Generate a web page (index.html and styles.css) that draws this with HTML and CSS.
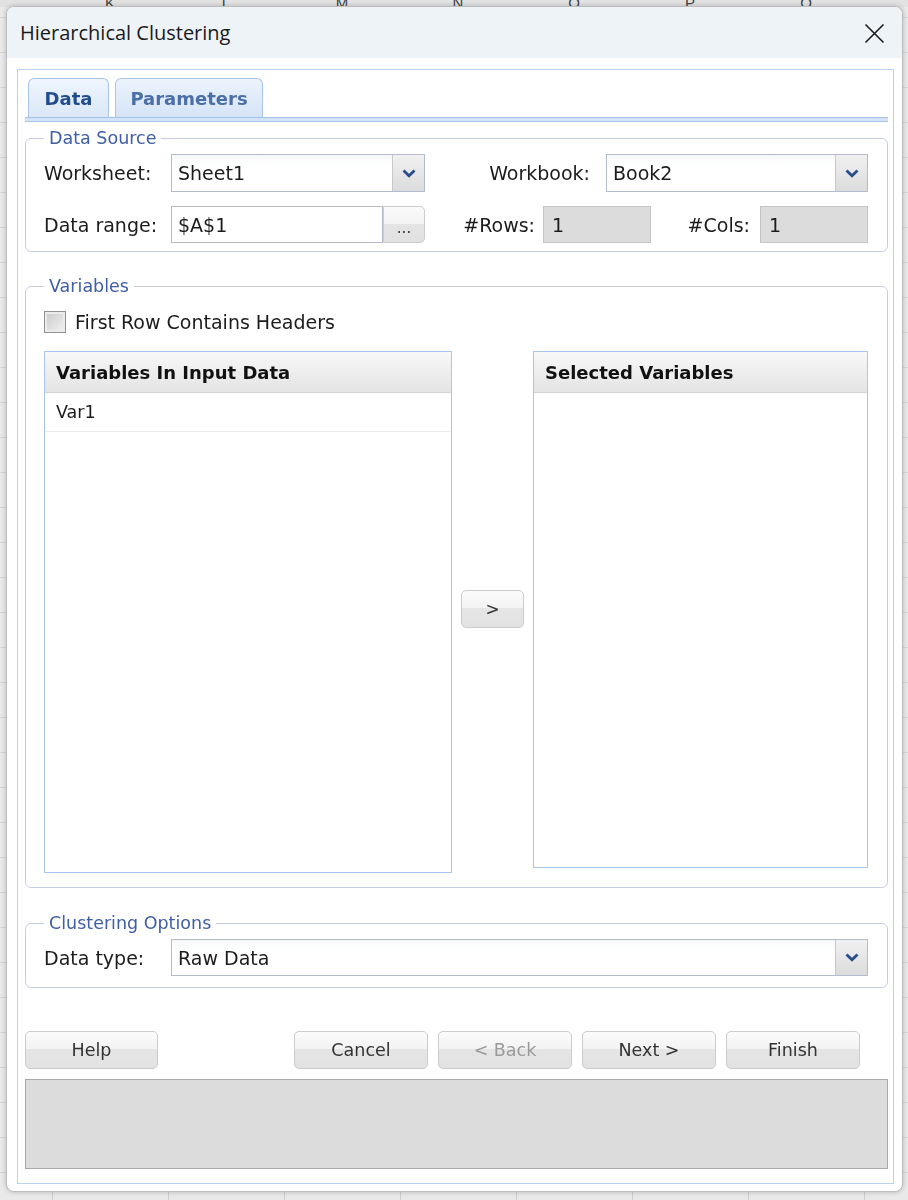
FILE: index.html
```html
<!DOCTYPE html>
<html>
<head>
<meta charset="utf-8">
<title>Hierarchical Clustering</title>
<link rel="stylesheet" href="styles.css">
</head>
<body>
<div class="sheet">
  <div class="colhead"><span>K</span><span>L</span><span>M</span><span>N</span><span>O</span><span>P</span><span>Q</span></div>
</div>
<div class="dialog">
  <div class="titlebar">
    <span class="title">Hierarchical Clustering</span>
    <svg class="close" width="21" height="21" viewBox="0 0 21 21"><path d="M1.5 1.5 L19.5 19.5 M19.5 1.5 L1.5 19.5" stroke="#1a1a1a" stroke-width="1.6" fill="none"/></svg>
  </div>
  <div class="dbody">
    <div class="panel">
      <div class="tabs">
        <div class="tab active">Data</div>
        <div class="tab">Parameters</div>
      </div>
      <div class="tabline"></div>

      <fieldset class="group ds">
        <legend>Data Source</legend>
        <div class="row r1">
          <span class="lbl">Worksheet:</span>
          <div class="select w254"><span class="val">Sheet1</span><span class="arrow"><svg width="14" height="9" viewBox="0 0 14 9"><path d="M1.5 1.5 L7 6.8 L12.5 1.5" stroke="#2b4c8c" stroke-width="2.8" fill="none"/></svg></span></div>
          <span class="lbl right wb">Workbook:</span>
          <div class="select w262"><span class="val">Book2</span><span class="arrow"><svg width="14" height="9" viewBox="0 0 14 9"><path d="M1.5 1.5 L7 6.8 L12.5 1.5" stroke="#2b4c8c" stroke-width="2.8" fill="none"/></svg></span></div>
        </div>
        <div class="row r2">
          <span class="lbl">Data range:</span>
          <div class="input w212">$A$1</div>
          <div class="dots">...</div>
          <span class="lbl right rows">#Rows:</span>
          <div class="ro">1</div>
          <span class="lbl right cols">#Cols:</span>
          <div class="ro">1</div>
        </div>
      </fieldset>

      <fieldset class="group vars">
        <legend>Variables</legend>
        <div class="chkrow"><span class="chk"></span><span class="chklbl">First Row Contains Headers</span></div>
        <div class="lists">
          <div class="list left">
            <div class="lhead">Variables In Input Data</div>
            <div class="litem">Var1</div>
          </div>
          <div class="movecol"><div class="btn move">&gt;</div></div>
          <div class="list right">
            <div class="lhead">Selected Variables</div>
          </div>
        </div>
      </fieldset>

      <fieldset class="group opts">
        <legend>Clustering Options</legend>
        <div class="row r3">
          <span class="lbl">Data type:</span>
          <div class="select wide"><span class="val">Raw Data</span><span class="arrow"><svg width="14" height="9" viewBox="0 0 14 9"><path d="M1.5 1.5 L7 6.8 L12.5 1.5" stroke="#2b4c8c" stroke-width="2.8" fill="none"/></svg></span></div>
        </div>
      </fieldset>

      <div class="buttons">
        <div class="btn">Help</div>
        <div class="btngroup">
          <div class="btn">Cancel</div>
          <div class="btn disabled">&lt; Back</div>
          <div class="btn">Next &gt;</div>
          <div class="btn">Finish</div>
        </div>
      </div>
      <div class="status"></div>
    </div>
  </div>
</div>
</body>
</html>
```

FILE: styles.css
```css
html, body {
  margin: 0;
  padding: 0;
  width: 908px;
  height: 1200px;
  overflow: hidden;
}
body {
  font-family: "DejaVu Sans", sans-serif;
  color: #1c1c1c;
  background: #e8e8e8;
}
.sheet {
  position: fixed;
  left: 0; top: 0; right: 0; bottom: 0;
  background-color: #e9e9e9;
  background-image:
    linear-gradient(to right, #cdcdcd 1px, transparent 1px),
    linear-gradient(to bottom, #d6d6d6 1px, transparent 1px);
  background-size: 116px 100%, 100% 35px;
  background-position: 52px 0, 0 17px;
}
.colhead {
  display: flex;
  padding-left: 52px;
  height: 7px;
  overflow: hidden;
  background: #e2e2e2;
}
.colhead span {
  width: 116px;
  flex: none;
  text-align: center;
  font-family: "Liberation Sans", sans-serif;
  font-size: 15px;
  line-height: 6px;
  color: #444;
}
.dialog {
  position: absolute;
  left: 6px;
  top: 6px;
  width: 897px;
  height: 1186px;
  box-sizing: border-box;
  border: 1px solid #bdbdbd;
  border-radius: 8px;
  background: #fff;
  box-shadow: 0 0 5px rgba(0,0,0,0.22);
  display: flex;
  flex-direction: column;
  overflow: hidden;
}
.titlebar {
  height: 51px;
  flex: none;
  background: #eef3f8;
  display: flex;
  align-items: center;
  justify-content: space-between;
  padding: 0 17px 0 13px;
}
.title {
  font-family: "Open Sans", "Noto Sans", sans-serif;
  font-size: 20px;
  color: #1a1a1a;
}
.close { display: block; margin-top: 2px; }
.dbody {
  flex: 1;
  display: flex;
  padding: 11px 8px 7px 10px;
}
.panel {
  flex: 1;
  border: 1px solid #b9d1f0;
  padding: 8px 5px 0 7px;
  display: flex;
  flex-direction: column;
}
.tabs {
  display: flex;
  height: 39px;
  margin-left: 3px;
}
.tab {
  box-sizing: border-box;
  height: 39px;
  border: 1px solid #a9c4ea;
  border-bottom: none;
  border-radius: 6px 6px 0 0;
  background: linear-gradient(#ecf3fc, #d5e4f7);
  font-weight: bold;
  font-size: 18px;
  color: #4a6ea6;
  display: flex;
  align-items: center;
  justify-content: center;
}
.tab.active { width: 81px; color: #1f4d8e; background: linear-gradient(#eef5fd, #dbe8f8); }
.tab + .tab { width: 148px; margin-left: 6px; }
.tabline {
  height: 3px;
  border-top: 1px solid #a3c0e8;
  border-bottom: 1px solid #a9c4ea;
  background: #d4e4f8;
}
.group {
  margin: 0;
  min-width: 0;
  border: 1px solid #c3cde0;
  border-radius: 6px;
  padding: 5px 19px 8px 18px;
}
.group legend {
  font-size: 17.5px;
  line-height: 22px;
  color: #3f5ea6;
  padding: 0 5px;
}
.ds { margin-top: 5px; }
.vars { margin-top: 23px; padding-bottom: 14px; }
.opts { margin-top: 24px; padding-bottom: 11px; }
.row {
  display: flex;
  align-items: center;
}
.r1 { height: 38px; }
.r2 { height: 37px; margin-top: 14px; }
.r3 { height: 37px; }
.lbl {
  width: 127px;
  flex: none;
  font-size: 19px;
  box-sizing: border-box;
}
.lbl.right { text-align: right; }
.lbl.wb { width: 181px; padding-right: 16px; }
.lbl.rows { width: 118px; padding-right: 8px; }
.lbl.cols { width: 109px; padding-right: 10px; }
.select {
  height: 100%;
  box-sizing: border-box;
  border: 1px solid #b2bccd;
  background: linear-gradient(#f6f8f8, #ffffff 30%);
  display: flex;
  align-items: center;
  flex: none;
}
.w254 { width: 254px; }
.w262 { width: 262px; }
.wide { width: 697px; }
.select .val {
  flex: 1;
  font-size: 19px;
  padding-left: 6px;
}
.arrow {
  width: 31px;
  height: 100%;
  border-left: 1px solid #c9c9c9;
  background: linear-gradient(#f0f0f0, #dcdcdc);
  display: flex;
  align-items: center;
  justify-content: center;
}
.arrow svg { display: block; }
.input {
  height: 100%;
  box-sizing: border-box;
  border: 1px solid #b2bccd;
  background: #fff;
  font-size: 19px;
  padding-left: 6px;
  display: flex;
  align-items: center;
  flex: none;
}
.w212 { width: 212px; }
.dots {
  width: 42px;
  height: 100%;
  box-sizing: border-box;
  flex: none;
  border: 1px solid #cbcbcb;
  border-radius: 0 5px 5px 0;
  background: linear-gradient(#fafafa, #f3f3f3 48%, #e4e4e4 50%, #e2e2e2);
  font-size: 15px;
  color: #333;
  display: flex;
  align-items: flex-end;
  justify-content: center;
  padding-bottom: 5px;
}
.ro {
  width: 108px;
  height: 100%;
  box-sizing: border-box;
  flex: none;
  border: 1px solid #c5c5c5;
  background: #dcdcdc;
  font-size: 19px;
  padding-left: 8px;
  display: flex;
  align-items: center;
}
.chkrow {
  height: 34px;
  display: flex;
  align-items: center;
  margin-top: 3px;
}
.chk {
  width: 22px;
  height: 22px;
  box-sizing: border-box;
  border: 1px solid #929292;
  background: linear-gradient(135deg, #c9c9c9, #f2f2f2);
  box-shadow: inset 0 0 0 2px #ececec;
  margin-right: 9px;
}
.chklbl { font-size: 19px; }
.lists {
  display: flex;
  align-items: flex-start;
  margin-top: 12px;
}
.list {
  box-sizing: border-box;
  border: 1px solid #a9c6ee;
  background: #fff;
  flex: none;
}
.list.left { width: 408px; height: 522px; }
.list.right { width: 335px; height: 517px; }
.lhead {
  height: 41px;
  box-sizing: border-box;
  border-bottom: 1px solid #d2d2d2;
  background: linear-gradient(#f8f8f8, #e4e4e4);
  font-weight: bold;
  font-size: 18px;
  display: flex;
  align-items: center;
  padding-left: 11px;
  color: #111;
}
.litem {
  height: 39px;
  box-sizing: border-box;
  border-bottom: 1px solid #ededed;
  font-size: 17.5px;
  display: flex;
  align-items: center;
  padding-left: 11px;
}
.movecol {
  width: 63px;
  margin: 0 9px;
  padding-top: 239px;
  flex: none;
}
.btn {
  box-sizing: border-box;
  height: 38px;
  width: 134px;
  border: 1px solid #cbcbcb;
  border-radius: 5px;
  background: linear-gradient(#fbfbfb, #f3f3f3 46%, #e5e5e5 48%, #e2e2e2);
  font-size: 17.5px;
  color: #333;
  display: flex;
  align-items: center;
  justify-content: center;
}
.btn.move { width: 63px; font-size: 17px; }
.btn.disabled { color: #9a9a9a; }
.buttons {
  display: flex;
  justify-content: space-between;
  margin-top: 43px;
}
.buttons > .btn { width: 133px; }
.btngroup {
  display: flex;
  gap: 10px;
  margin-right: 28px;
}
.status {
  margin-top: 10px;
  height: 90px;
  box-sizing: border-box;
  border: 1px solid #a8a8a8;
  background: #dcdcdc;
}
```
